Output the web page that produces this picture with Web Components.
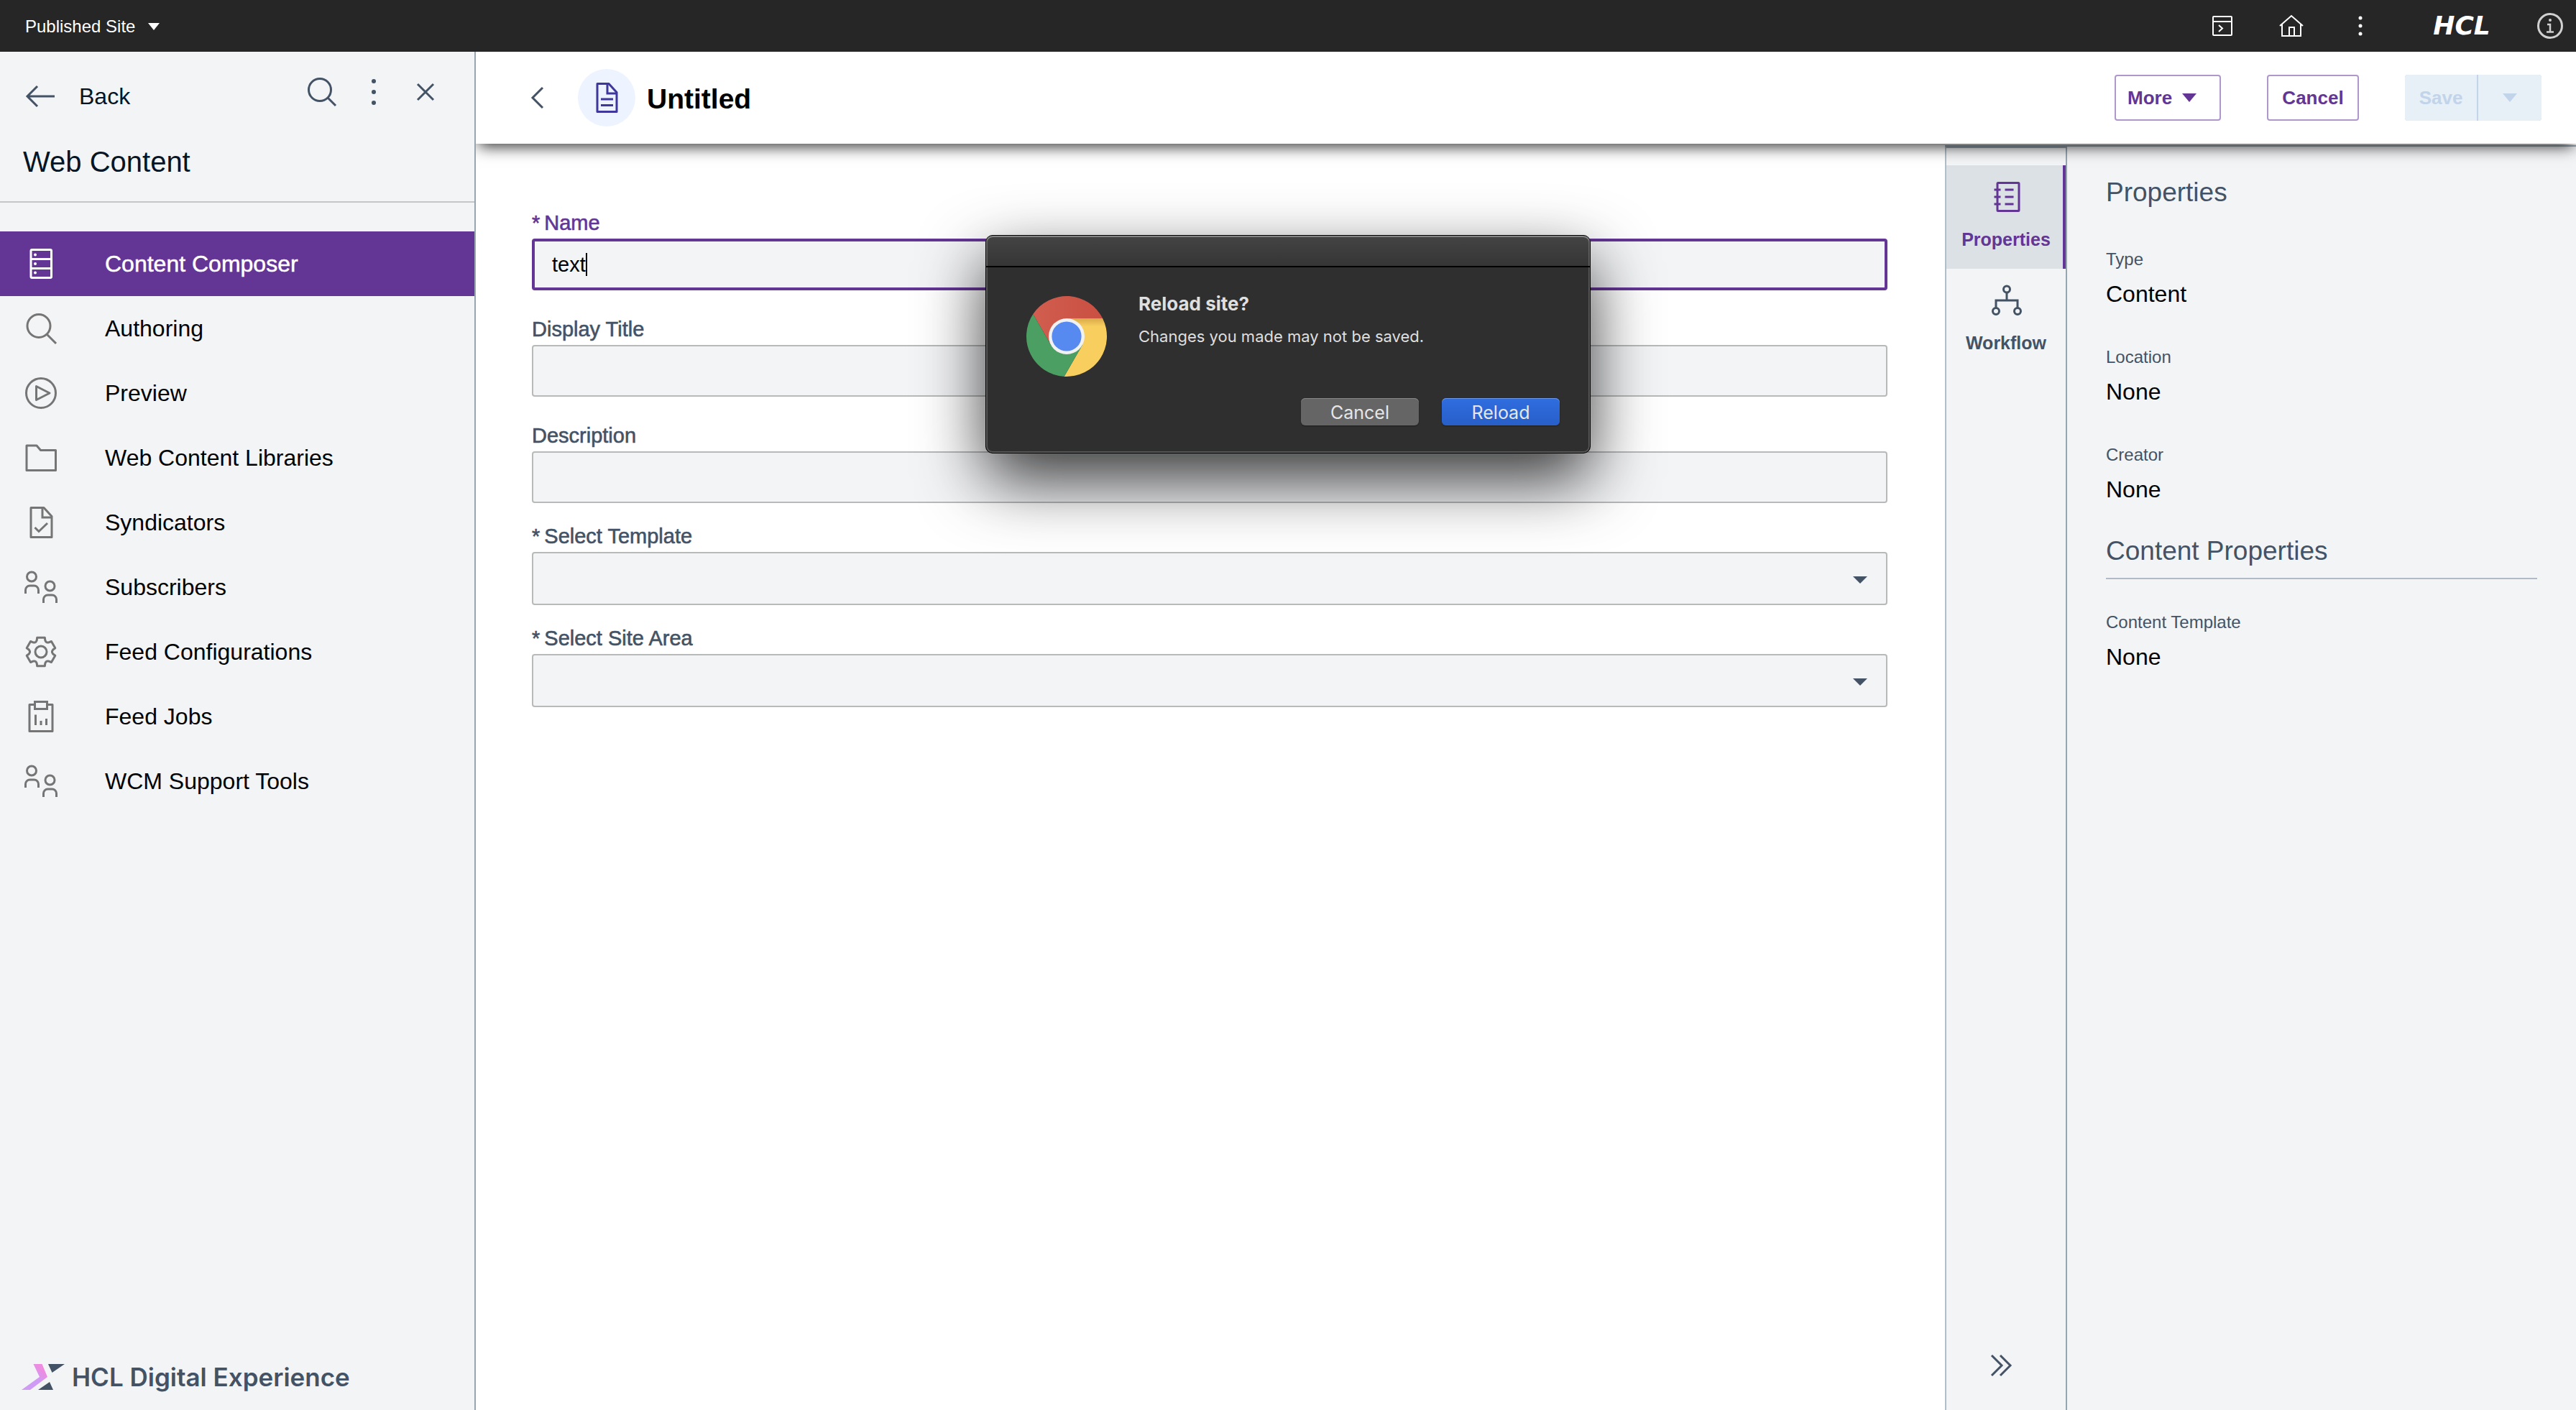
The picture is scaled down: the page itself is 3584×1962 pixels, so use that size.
<!DOCTYPE html>
<html lang="en">
<head>
<meta charset="utf-8">
<title>Web Content - Untitled</title>
<style>
  html, body { margin: 0; height: 100%; }
  body {
    font-family: "Liberation Sans", Arial, sans-serif;
    color: #000;
    background: #fff;
    --purple: #633594;
    --slate: #435365;
    --panel: #f3f4f6;
    --line: #97a5b1;
  }
</style>
</head>
<body>
<dx-app></dx-app>
<script>
const define = (name, css, html, setup) => {
  const template = document.createElement('template');
  template.innerHTML = `<style>*{box-sizing:border-box}button,input,select{font:inherit;color:inherit}button{background:none;border:0;padding:0;margin:0}${css}</style>${html}`;
  customElements.define(name, class extends HTMLElement {
    connectedCallback() {
      if (this.shadowRoot) return;
      const root = this.attachShadow({ mode: 'open' });
      root.append(template.content.cloneNode(true));
      if (setup) setup(root, this);
    }
  });
};

/* ---------- icons ---------- */
const gear = () => {
  const pts = [];
  for (let k = 0; k < 6; k++) {
    for (const [r, a] of [[15.5, -27], [17, -20], [20.5, -15], [20.5, 15], [17, 20], [15.5, 27]]) {
      const t = (k * 60 + a - 90) * Math.PI / 180;
      pts.push((25 + r * Math.cos(t)).toFixed(2) + ',' + (25 + r * Math.sin(t)).toFixed(2));
    }
  }
  return `<polygon points="${pts.join(' ')}"/><circle cx="25" cy="25" r="8"/>`;
};
const people = '<circle cx="12" cy="10.5" r="6.5"/><path d="M3.5 34v-5a6 6 0 0 1 6-6h6a6 6 0 0 1 6 6v5"/><circle cx="37.5" cy="23.5" r="6.5"/><path d="M28.5 47v-5a6 6 0 0 1 6-6h6a6 6 0 0 1 6 6v5"/>';
/* name: [width, height, stroke width, drawing] */
const ICONS = {
  composer: [50, 50, 3, '<rect x="11" y="5.5" width="28.5" height="39" rx="1.5"/><path d="M11 18.5h28.5M11 31.5h28.5"/><g fill="currentColor" stroke="none"><circle cx="17" cy="12.5" r="2"/><circle cx="17" cy="25" r="2"/><circle cx="17" cy="37.5" r="2"/></g>'],
  search: [50, 50, 3, '<circle cx="22" cy="21.5" r="16"/><path d="M33 33l13 13"/>'],
  play: [50, 50, 3, '<circle cx="25" cy="25" r="20.5"/><path d="M18.5 15.5v19L37 25z" stroke-linejoin="round"/>'],
  folder: [50, 50, 3, '<path d="M5 8h14l5.5 6.5h21v28H5z" stroke-linejoin="round"/>'],
  check: [50, 50, 3, '<path d="M11 4.5h18l11 12v29H11z" stroke-linejoin="round"/><path d="M27 4.5v13.5h13M16.5 32l5.5 5.5L34 26"/>'],
  people: [50, 50, 3, people],
  gear: [50, 50, 3, `<g stroke-linejoin="round">${gear()}</g>`],
  jobs: [50, 50, 3, '<path d="M16.5 8.5H9v37h32v-37h-7.5" stroke-linejoin="round"/><path d="M16.5 4.5h17v10h-17zM17.5 22.5V37M25 31v6M32.5 28v9"/>'],
  back: [40, 32, 3, '<path d="M16 2L2 16l14 14M2 16h38"/>'],
  find: [40, 40, 3, '<circle cx="17" cy="17" r="15.5"/><path d="M28 28l11 11"/>'],
  dots: [8, 38, 0, '<g fill="currentColor"><circle cx="4" cy="4" r="3"/><circle cx="4" cy="19" r="3"/><circle cx="4" cy="34" r="3"/></g>'],
  close: [24, 24, 3, '<path d="M1 1l22 22M23 1L1 23"/>'],
  chevron: [20, 32, 3, '<path d="M17 2L3 16l14 14"/>'],
  doc: [50, 50, 3, '<path d="M12 5.5h16l11 12v27H12z" stroke-linejoin="round"/><path d="M26 5.5v13.5h13M17 27h17M17 35.5h17"/>'],
  console: [28, 30, 2, '<rect x="1" y="2" width="26" height="26" rx="1"/><path d="M1 9h26M9 14l5 4.5L9 23"/>'],
  home: [36, 34, 2, '<path d="M2 17L18 3l16 14M5 15v16h26V15"/><path d="M15 31V19h7v12"/>'],
  topdots: [8, 30, 0, '<g fill="currentColor"><circle cx="4" cy="4" r="2.5"/><circle cx="4" cy="15" r="2.5"/><circle cx="4" cy="26" r="2.5"/></g>'],
  info: [36, 36, 3, '<circle cx="18" cy="18" r="16.5"/><path d="M14 16h4v10M13 26.5h10" stroke-width="2.5"/><circle cx="18" cy="10" r="2" fill="currentColor" stroke="none"/>'],
  notebook: [48, 48, 3, '<rect x="12" y="4.5" width="30" height="39" rx="1"/><path d="M7.5 14h9M7.5 24h9M7.5 34h9M22.5 14h12M22.5 24h12M22.5 34h12"/>'],
  workflow: [48, 48, 3, '<circle cx="25" cy="8.5" r="4.5"/><circle cx="10" cy="39" r="4.5"/><circle cx="40" cy="39" r="4.5"/><path d="M25 13v11M10 34.5V24h30v10.5"/>'],
  expand: [32, 32, 3, '<path d="M3 2l14 14L3 30M15 2l14 14-14 14"/>'],
  tri16: [16, 10, 0, '<path d="M0 0h16l-8 10z" fill="currentColor"/>'],
  tri20: [20, 12, 0, '<path d="M0 0h20L10 12z" fill="currentColor"/>'],
  caret: [20, 10, 0, '<path d="M0 0h20L10 10z" fill="currentColor"/>'],
  dx: [60, 36, 0, '<defs><linearGradient id="g" x1="0" y1="1" x2="1" y2="0"><stop offset="0" stop-color="#cf9bf5"/><stop offset=".5" stop-color="#cf9bf5"/><stop offset=".8" stop-color="#ef8be0"/></linearGradient></defs><path d="M16.5 0h12L36 18 12 36H0l25-18z" fill="url(#g)"/><path d="M37 0h23L42.5 12zM23 36l16-11 5 11z" fill="#435365"/>'],
  chrome: [112, 112, 0, '<defs><linearGradient id="y" x1="0" y1="0" x2="0" y2="1"><stop offset="0" stop-color="#d9a94a"/><stop offset=".14" stop-color="#f8cf5f"/></linearGradient><linearGradient id="r" x1="0" y1="0" x2="1" y2="0"><stop offset="0" stop-color="#d15e50"/><stop offset="1" stop-color="#c94f41"/></linearGradient></defs><g transform="translate(56 56)"><path d="M-46.7-30.9A56 56 0 0 1 50.1-25L0-25-21.65 12.5z" fill="url(#r)"/><path d="M50.1-25A56 56 0 0 1-3.4 55.9L21.65 12.5 0-25z" fill="url(#y)"/><path d="M-3.4 55.9A56 56 0 0 1-46.7-30.9L-21.65 12.5 21.65 12.5z" fill="#4c9f63"/><circle r="25" fill="#f1f1f1"/><circle r="20.6" fill="#568af0"/></g>']
};
define('dx-icon', ':host{display:inline-flex;flex:none}svg{display:block;overflow:visible}', '', (root, host) => {
  const [w, h, s, body] = ICONS[host.getAttribute('name')];
  root.innerHTML += `<svg width="${w}" height="${h}" viewBox="0 0 ${w} ${h}" fill="none" ${s ? `stroke="currentColor" stroke-width="${s}"` : ''} aria-hidden="true">${body}</svg>`;
});
const prependIcon = (selector) => (root, host) => {
  const icon = document.createElement('dx-icon');
  icon.setAttribute('name', host.getAttribute('icon'));
  root.querySelector(selector).prepend(icon);
};

/* ---------- top bar ---------- */
define('dx-topbar', `
  :host{display:flex;justify-content:space-between;height:72px;background:#262626;color:#fff}
  .site{display:flex;align-items:center;gap:18px;padding:2px 0 0 35px;font-size:24px}
  .tools{display:flex;align-items:center;padding-right:18px}
  .tools>button{width:96px;height:72px;display:flex;align-items:center;justify-content:center}
  .brand{width:126px;margin:0 42px 0 30px;text-align:center;font:italic bold 36px/40px "DejaVu Sans",sans-serif}
  .tools>.info{width:36px;color:#d0d0d0}`, `
  <button class="site">Published Site <dx-icon name="tri16"></dx-icon></button>
  <div class="tools">
    <button aria-label="Console"><dx-icon name="console"></dx-icon></button>
    <button aria-label="Home"><dx-icon name="home"></dx-icon></button>
    <button aria-label="More"><dx-icon name="topdots"></dx-icon></button>
    <span class="brand">HCL</span>
    <button class="info" aria-label="Information"><dx-icon name="info"></dx-icon></button>
  </div>`);

/* ---------- sidebar ---------- */
define('dx-nav-item', `
  :host{display:block}
  a{display:flex;align-items:center;gap:64px;height:90px;padding-left:32px;font-size:32px;color:#000;text-decoration:none}
  dx-icon{color:#757575}
  :host([active]) a{background:var(--purple);color:#fff;-webkit-text-stroke:0.5px #fff}
  :host([active]) dx-icon{color:#fff}`,
  '<a href="#"><slot></slot></a>', prependIcon('a'));

define('dx-sidebar', `
  :host{display:flex;flex-direction:column;flex:none;width:662px;background:var(--panel);border-right:2px solid var(--line)}
  header{height:210px;padding-top:16px;border-bottom:2px solid #c6c6c8}
  .row{display:flex;justify-content:space-between;height:80px;padding:0 32px 0 36px;color:var(--slate)}
  .back{display:flex;align-items:center;gap:34px;padding-top:12px;color:var(--slate);text-decoration:none;font-size:32px}
  .back span{color:#051525}
  .tools{display:flex}
  .tools button{width:72px;display:flex;align-items:center;justify-content:center}
  h2{margin:33px 0 0 32px;font-size:40px;line-height:48px;font-weight:400;color:#051525}
  nav{flex:1;padding-top:40px}
  footer{display:flex;align-items:center;gap:10px;height:92px;padding:0 30px;color:var(--slate);font:600 35px/44px Inter,sans-serif}`, `
  <header>
    <div class="row">
      <a class="back" href="#"><dx-icon name="back"></dx-icon><span>Back</span></a>
      <div class="tools">
        <button aria-label="Search"><dx-icon name="find"></dx-icon></button>
        <button aria-label="Options"><dx-icon name="dots"></dx-icon></button>
        <button aria-label="Close"><dx-icon name="close"></dx-icon></button>
      </div>
    </div>
    <h2>Web Content</h2>
  </header>
  <nav>
    <dx-nav-item icon="composer" active>Content Composer</dx-nav-item>
    <dx-nav-item icon="search">Authoring</dx-nav-item>
    <dx-nav-item icon="play">Preview</dx-nav-item>
    <dx-nav-item icon="folder">Web Content Libraries</dx-nav-item>
    <dx-nav-item icon="check">Syndicators</dx-nav-item>
    <dx-nav-item icon="people">Subscribers</dx-nav-item>
    <dx-nav-item icon="gear">Feed Configurations</dx-nav-item>
    <dx-nav-item icon="jobs">Feed Jobs</dx-nav-item>
    <dx-nav-item icon="people">WCM Support Tools</dx-nav-item>
  </nav>
  <footer><dx-icon name="dx"></dx-icon><span>HCL Digital Experience</span></footer>`);

/* ---------- page header ---------- */
define('dx-header', `
  :host{display:flex;align-items:center;justify-content:space-between;position:relative;z-index:1;height:128px;padding:0 48px 0 62px;background:#fff;box-shadow:0 8px 20px -4px rgba(0,0,0,.8)}
  .title,.actions{display:flex;align-items:center}
  .prev{width:48px;height:48px;display:flex;align-items:center;justify-content:center;color:var(--slate)}
  .badge{display:flex;align-items:center;justify-content:center;width:80px;height:80px;margin:0 16px 0 32px;border-radius:50%;background:#edf4ff;color:#3f379b}
  h1{margin:0;padding-top:4px;font-size:39px;line-height:48px;font-weight:700}
  .actions{gap:64px;font-size:26px;font-weight:700;color:var(--purple)}
  .actions button{display:flex;align-items:center;justify-content:center;gap:14px;height:64px}
  .outline{border:2px solid #b097cb;border-radius:4px}
  .actions .more{width:148px;justify-content:flex-start;padding-left:16px}
  .cancel{width:128px}
  .split{display:flex;gap:2px;border-radius:4px;overflow:hidden;background:#c2d4ea;color:#c2d4ea}
  .split button{background:#e7eff7}
  .save{width:100px}
  .drop{width:88px}`, `
  <div class="title">
    <button class="prev" aria-label="Previous"><dx-icon name="chevron"></dx-icon></button>
    <span class="badge"><dx-icon name="doc"></dx-icon></span>
    <h1>Untitled</h1>
  </div>
  <div class="actions">
    <button class="outline more">More<dx-icon name="tri20"></dx-icon></button>
    <button class="outline cancel">Cancel</button>
    <div class="split"><button class="save" disabled>Save</button><button class="drop" disabled aria-label="Save options"><dx-icon name="tri20"></dx-icon></button></div>
  </div>`);

/* ---------- form ---------- */
define('dx-field', `
  :host{display:block;margin-top:38px}
  :host([kind=select]){margin-top:30px}
  label{display:flex;gap:6px;margin-bottom:6px;font-size:29px;line-height:32px;color:var(--slate);-webkit-text-stroke:0.6px currentColor}
  .box{display:flex;align-items:center;height:72px;padding:0 26px;border:2px solid #b8baba;border-radius:4px;background:var(--panel)}
  input{flex:1;min-width:0;height:100%;padding:0;border:0;outline:0;background:none;font-size:29px}
  :host([focused]) label{color:var(--purple)}
  :host([focused]) .box{border:4px solid var(--purple);padding:0 24px}
  :host([focused]) input{flex:none;field-sizing:content;caret-color:transparent}
  .cursor{width:2px;height:32px;background:#000}
  :host([kind=select]) .box{display:grid;height:74px;padding:0}
  select{grid-area:1/1;width:100%;height:70px;padding:0 26px;border:0;outline:0;appearance:none;background:none;font-size:29px}
  .box dx-icon{grid-area:1/1;justify-self:end;margin:4px 26px 0 0;color:var(--slate);pointer-events:none}`, '',
  (root, host) => {
    const get = n => host.getAttribute(n);
    const star = host.hasAttribute('required') ? '<span>*</span> ' : '';
    const control = get('kind') === 'select'
      ? '<select id="c"></select><dx-icon name="caret"></dx-icon>'
      : `<input id="c" type="text" value="${get('value') || ''}">${host.hasAttribute('focused') ? '<span class="cursor"></span>' : ''}`;
    root.innerHTML += `<label for="c">${star}<span>${get('label')}</span></label><div class="box">${control}</div>`;
  });

define('dx-form', ':host{display:block;flex:1;min-width:0;padding:56px 80px 0 78px}', `
  <dx-field label="Name" value="text" required focused></dx-field>
  <dx-field label="Display Title"></dx-field>
  <dx-field label="Description"></dx-field>
  <dx-field label="Select Template" kind="select" required></dx-field>
  <dx-field label="Select Site Area" kind="select" required></dx-field>`);

/* ---------- right rail and properties ---------- */
define('dx-tab', `
  :host{display:block}
  button{display:flex;flex-direction:column;align-items:center;gap:20px;width:100%;height:144px;padding-top:20px;font-size:25px;line-height:30px;font-weight:700;color:var(--slate)}
  :host([active]) button{background:#dce1e6;color:var(--purple);box-shadow:inset -4px 0 var(--purple)}`,
  '<button><slot></slot></button>', prependIcon('button'));

define('dx-rail', `
  :host{display:flex;flex-direction:column;flex:none;width:168px;margin-top:2px;padding-top:24px;background:var(--panel);border-left:2px solid #b1bdc7;border-top:4px solid var(--line)}
  .tabs{flex:1}
  .expand{align-self:flex-start;width:152px;height:124px;display:flex;align-items:center;justify-content:center;color:var(--slate)}`, `
  <div class="tabs">
    <dx-tab icon="notebook" active>Properties</dx-tab>
    <dx-tab icon="workflow">Workflow</dx-tab>
  </div>
  <button class="expand" aria-label="Collapse panel"><dx-icon name="expand"></dx-icon></button>`);

define('dx-prop', `
  :host{display:block;margin-bottom:44px}
  .name{margin-bottom:4px;font-size:24px;line-height:40px;color:var(--slate)}
  .value{font-size:32px;line-height:48px}`, '<div class="name"></div><div class="value"><slot></slot></div>',
  (root, host) => { root.querySelector('.name').textContent = host.getAttribute('label'); });

define('dx-properties', `
  :host{display:block;flex:none;width:710px;margin-top:2px;padding:40px 54px 0;background:var(--panel);border-left:2px solid var(--line);border-top:2px solid var(--line)}
  h3{margin:0 0 49px;font-size:37px;line-height:48px;font-weight:400;color:var(--slate)}
  h3.ruled{margin:0 0 40px;height:57px;line-height:36px;border-bottom:2px solid #b1bbc8}`, `
  <h3>Properties</h3>
  <dx-prop label="Type">Content</dx-prop>
  <dx-prop label="Location">None</dx-prop>
  <dx-prop label="Creator">None</dx-prop>
  <h3 class="ruled">Content Properties</h3>
  <dx-prop label="Content Template">None</dx-prop>`);

/* ---------- dialog ---------- */
define('dx-dialog', `
  :host{display:block;position:absolute;z-index:2;top:327px;left:0;right:0;margin:0 auto;width:842px;border-radius:10px;background:#2f2f2f;box-shadow:0 36px 90px rgba(0,0,0,.78);font-family:Inter,sans-serif;color:#dfdfdf;overflow:hidden}
  .frame{border:1px solid #000;border-radius:10px;box-shadow:inset 0 2px #767676,inset 0 0 0 2px #575757}
  .bar{height:44px;border-bottom:2px solid #000;background:linear-gradient(rgba(255,255,255,.1),rgba(255,255,255,.03))}
  .body{display:flex;gap:44px;padding:35px 42px 0 56px}
  .body dx-icon{margin-top:5px}
  h4{margin:0 0 15px;font-size:26px;line-height:32px;font-weight:700}
  p{margin:0;font-size:22px;line-height:28px}
  .buttons{display:flex;justify-content:flex-end;gap:32px;padding:30px 42px 38px}
  .buttons button{width:164px;height:38px;padding-top:2px;border-radius:6px;font-size:25px;line-height:36px;background:#656565;color:#e6e6e6;box-shadow:inset 0 1px #888,0 1px 2px rgba(0,0,0,.4)}
  .buttons .go{background:linear-gradient(#2f6de0,#285fc8);box-shadow:inset 0 1px #6a98ea,0 1px 2px rgba(0,0,0,.4)}`, `
  <div class="frame" role="alertdialog" aria-label="Reload site?">
    <div class="bar"></div>
    <div class="body">
      <dx-icon name="chrome"></dx-icon>
      <div><h4>Reload site?</h4><p>Changes you made may not be saved.</p></div>
    </div>
    <div class="buttons"><button>Cancel</button><button class="go">Reload</button></div>
  </div>`);

/* ---------- shell ---------- */
define('dx-app', `
  :host{display:flex;flex-direction:column;position:relative;min-height:100vh}
  .shell{display:flex;flex:1}
  main{display:flex;flex-direction:column;flex:1;min-width:0;overflow:hidden}
  .work{display:flex;flex:1}`, `
  <dx-topbar></dx-topbar>
  <div class="shell">
    <dx-sidebar></dx-sidebar>
    <main>
      <dx-header></dx-header>
      <div class="work">
        <dx-form></dx-form>
        <dx-rail></dx-rail>
        <dx-properties></dx-properties>
      </div>
    </main>
  </div>
  <dx-dialog></dx-dialog>`);
</script>
</body>
</html>
